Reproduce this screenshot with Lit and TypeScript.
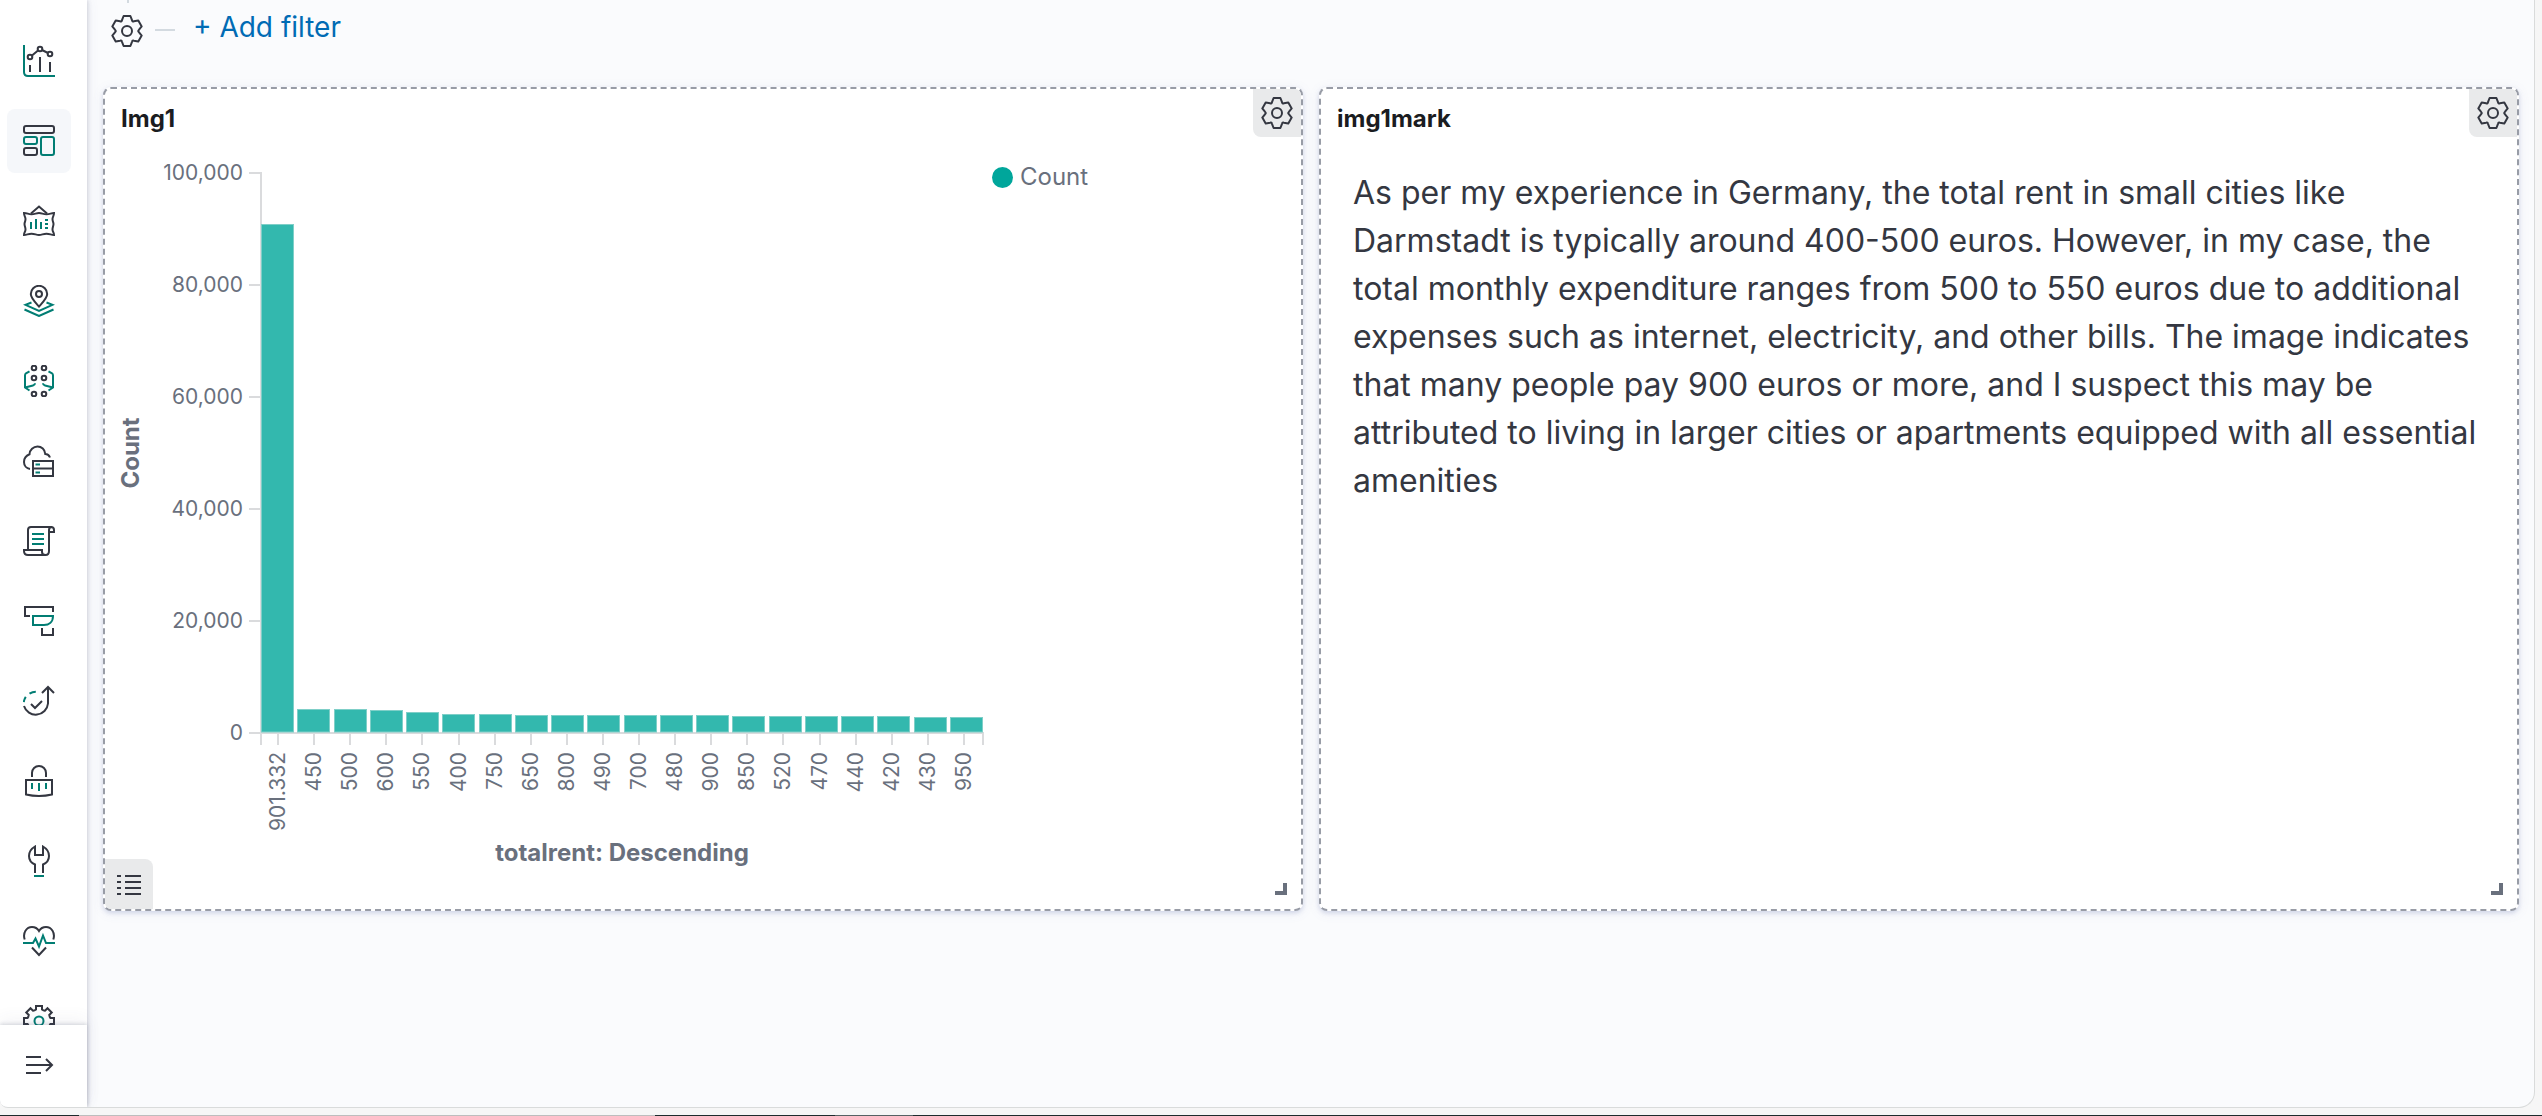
import { LitElement, html, svg, css } from "lit";
import { customElement } from "lit/decorators.js";

type Point = [number, number];

/* Outline of a cog: each tooth is given in local coordinates (tip and base half widths). */
function cog(teeth: number, tip: number, outer: number, base: number, inner: number): string {
  const at = (k: number, x: number, y: number): Point => {
    const a = (k * 2 * Math.PI) / teeth;
    return [16 + x * Math.cos(a) + y * Math.sin(a), 16 + x * Math.sin(a) - y * Math.cos(a)];
  };
  const f = (p: Point) => `${p[0].toFixed(2)} ${p[1].toFixed(2)}`;
  let d = "";
  for (let k = 0; k < teeth; k++) {
    d += `${k ? "L" : "M"}${f(at(k, -base, inner))}L${f(at(k, -tip, outer))}L${f(at(k, tip, outer))}L${f(at(k, base, inner))}`;
    d += `Q${f(at(k + 0.5, 0, inner - 0.2))} ${f(at(k + 1, -base, inner))}`;
  }
  return d + "Z";
}

const icon = (body: unknown) => html`<svg class="icon" viewBox="0 0 32 32" aria-hidden="true">${body}</svg>`;

const settingsIcon = icon(svg`
  <path class="d" stroke-linejoin="round" d=${cog(6, 3.4, 15, 5, 10.8)}></path>
  <circle class="d" cx="16" cy="16" r="5"></circle>`);

const listIcon = icon(svg`<path class="d" d="M4 8h4M12 8h16M4 14h4M12 14h16M4 20h4M12 20h16M4 26h4M12 26h16"></path>`);

const expandIcon = icon(svg`<path class="d" d="M3 8h15M3 16h26M3 24h15M23 10l6 6-6 6"></path>`);

const navItems = [
  {
    label: "Visualize",
    body: svg`
      <path class="t" d="M1 0v27q0 4 4 4h27"></path>
      <circle class="d" cx="7" cy="12" r="2.3"></circle>
      <circle class="d" cx="17" cy="4" r="2.3"></circle>
      <circle class="d" cx="27" cy="9" r="2.3"></circle>
      <path class="d" d="M9 10.5l6-5M19 5l6 3M7 20v7M17 12v15M27 17v10"></path>`,
  },
  {
    label: "Dashboard",
    active: true,
    body: svg`
      <rect class="d" x="1" y="1" width="30" height="7" rx="2"></rect>
      <rect class="t" x="1" y="12" width="13" height="7" rx="2"></rect>
      <rect class="d" x="1" y="23" width="13" height="7" rx="2"></rect>
      <rect class="t" x="18" y="12" width="13" height="18" rx="2"></rect>`,
  },
  {
    label: "Canvas",
    body: svg`
      <path class="d" d="M8 8.5l8-7 8 7"></path>
      <path class="d" d="M1 8c3.5 0 4 1.300 7.500 1.300S13 8 16 8s4 1.300 7.500 1.300S28 8 31 8c0 3-1.500 3.500-1.500 6s1 3 1 5-1 3-1 5.500S31 27 31 30c-3 0-4-1.300-7.500-1.300S19 30 16 30s-4-1.300-7.500-1.300S4 30 1 30c0-3 1.500-3 1.500-5.500s-1-3.500-1-5.500 1-2.500 1-5S1 11 1 8z"></path>
      <path class="t" d="M8 17v7M13 14v10M18 17v7M22 15h3M22 19h3M22 23h3"></path>`,
  },
  {
    label: "Maps",
    body: svg`
      <path class="d" d="M16 21.500C11 16 7.800 13 7.800 9a8.200 8.200 0 0 1 16.400 0c0 4-3.200 7-8.200 12.500z"></path>
      <circle class="d" cx="16" cy="9" r="3"></circle>
      <path class="t" d="M8.500 17.500l-6 2.300L16 26l13.500-6.200-6-2.300M1.500 24.500L16 31l14.500-6.500"></path>`,
  },
  {
    label: "Machine Learning",
    body: svg`
      ${[3, 13, 29].map((y) => [11, 21].map((x) => svg`<circle class="d" cx=${x} cy=${y} r="2.3"></circle>`))}
      <path class="t" d="M6.500 6.300L3 8.300Q2 9 2 10.500V22.500L6.500 25.500M12 18.300Q12 20 10 20.500L2 22.500M25.500 6.300L29 8.300Q30 9 30 10.500V22.500L25.500 25.500M20 18.300Q20 20 22 20.500L30 22.500"></path>`,
  },
  {
    label: "Metrics",
    body: svg`
      <path class="d" d="M27 12.500C26 10 24 9 22.300 9 22 4.500 18.500 1.500 14.500 1.500S6.500 5 6.500 9.300C3.500 10.500 1 13.500 1 17c0 3.500 2.500 6.500 6 7"></path>
      <rect class="d" x="10" y="16" width="20" height="15"></rect>
      <path class="d" d="M10 23.500h20"></path>
      <path class="t" d="M12.500 19.500h4.500M12.500 27.500h4.500"></path>`,
  },
  {
    label: "Logs",
    body: svg`
      <path class="d" d="M5 25V5q0-3 3-3h20q3 0 3 3v2h-5V5q0-3 3-3M26 7v19q0 4-3.500 4H5q-4 0-4-4v-1h18v2q0 3 3.500 3"></path>
      <path class="t" d="M9 9h12M9 14h12M9 19h12"></path>`,
  },
  {
    label: "APM",
    body: svg`
      <path class="d" d="M7 11H2V2h28v5M19 23v7h11v-7"></path>
      <path class="t" d="M10 11h20c0 6-4 9-9 9H10z"></path>`,
  },
  {
    label: "Uptime",
    body: svg`
      <path class="d" d="M19 8l6-6 6 6M25 2v16.500A12.300 12.300 0 0 1 1 21M8 19l4 4 7-7"></path>
      <path class="t" d="M.8 17q.4-3 2-5.200M6.500 8.700q3-2 6.300-2"></path>`,
  },
  {
    label: "Security",
    body: svg`
      <path class="d" d="M9 12V8a7 7 0 0 1 14 0v4M3 15h26v14.500q-13 3-26 0z"></path>
      <path class="t" d="M9 18v6M16 18v8M23 18v6"></path>`,
  },
  {
    label: "Dev Tools",
    body: svg`
      <path class="d" d="M12 28v-8.500C8.500 18 6 15 6 11c0-4 2.500-7.500 6-9.500V10h8V1.500c3.500 2 6 5.500 6 9.500 0 4-2.500 7-6 8.500V28"></path>
      <path class="t" d="M11 31h10"></path>`,
  },
  {
    label: "Stack Monitoring",
    body: svg`
      <path class="d" d="M1.700 14.500C-.5 8 3.500 2 9 2c3 0 5.500 1.500 7 4 1.500-2.500 4-4 7-4 5.500 0 9.500 6 7.300 12.500M9 22.500l7 7.500 7-7.500"></path>
      <path class="t" d="M0 18h10l2.500-4.500L16 21.500l4-11 3 7.500h9"></path>`,
  },
  {
    label: "Management",
    body: svg`
      <path class="d" d=${cog(8, 3, 15, 3, 11.5)}></path>
      <circle class="t" cx="16" cy="16" r="4.500"></circle>`,
  },
];

const rents: [string, number][] = [
  ["901.332", 90900], ["450", 4290], ["500", 4250], ["600", 4110], ["550", 3750],
  ["400", 3390], ["750", 3390], ["650", 3300], ["800", 3210], ["490", 3210],
  ["700", 3210], ["480", 3180], ["900", 3160], ["850", 3120], ["520", 3040],
  ["470", 3040], ["440", 3040], ["420", 3040], ["430", 2860], ["950", 2860],
];

const iconStyles = css`
  .icon { display: block; width: 32px; height: 32px; fill: none; }
  .d { stroke: #343741; stroke-width: 2; fill: none; }
  .t { stroke: #017d73; stroke-width: 2; fill: none; }
  button { display: flex; align-items: center; justify-content: center; padding: 0; border: 0; background: none; cursor: pointer; font: inherit; }
`;

@customElement("side-nav")
export class SideNav extends LitElement {
  static styles = [
    iconStyles,
    css`
      :host { display: flex; flex-direction: column; width: 87px; min-height: 0; background: #fff; box-shadow: 1px 0 4px rgba(70, 76, 100, 0.2), 0 0 12px rgba(90, 100, 160, 0.1); }
      ul { flex: 1; min-height: 0; overflow: hidden; margin: 0; padding: 29px 0 0 7px; box-sizing: border-box; list-style: none; display: flex; flex-direction: column; gap: 16px; }
      li { flex: none; }
      .item { width: 64px; height: 64px; border-radius: 8px; }
      .active { background: #f5f7fa; }
      .foot { padding: 8px 0 10px 7px; box-shadow: 0 -1px 4px rgba(70, 76, 100, 0.22), 0 -6px 16px rgba(70, 76, 100, 0.06); }
    `,
  ];
  render() {
    return html`
      <ul>
        ${navItems.map((n) => html`<li><button class="item ${n.active ? "active" : ""}" aria-label=${n.label}>${icon(n.body)}</button></li>`)}
      </ul>
      <div class="foot"><button class="item" aria-label="Expand">${expandIcon}</button></div>
    `;
  }
}

@customElement("dash-panel")
export class DashPanel extends LitElement {
  static properties = { heading: {}, inspect: { type: Boolean } };
  declare heading: string;
  declare inspect: boolean;
  static styles = [
    iconStyles,
    css`
      :host { position: relative; display: flex; flex-direction: column; min-width: 0; height: 824px; box-sizing: border-box; border: 2px dashed #989ca6; border-radius: 8px; background: #fff; box-shadow: 0 2px 4px rgba(110, 120, 180, 0.24), 0 2px 12px rgba(110, 120, 180, 0.1); }
      h2 { margin: 0; padding: 12px 16px; font-size: 24px; line-height: 36px; font-weight: 700; color: #1a1c21; }
      .body { flex: 1; min-height: 0; }
      .options { position: absolute; top: 0; right: 0; width: 48px; height: 48px; background: #e9eaeb; border-radius: 0 6px 0 8px; }
      .legend { position: absolute; bottom: 0; left: 0; width: 48px; height: 50px; background: #e9eaeb; border-radius: 0 8px 0 6px; }
      .grip { position: absolute; right: 14px; bottom: 14px; width: 8px; height: 8px; border: solid #69707d; border-width: 0 4px 4px 0; }
    `,
  ];
  render() {
    return html`
      <h2>${this.heading}</h2>
      <div class="body"><slot></slot></div>
      <button class="options" aria-label="Panel options">${settingsIcon}</button>
      ${this.inspect ? html`<button class="legend" aria-label="Toggle legend">${listIcon}</button>` : ""}
      <span class="grip"></span>
    `;
  }
}

@customElement("rent-chart")
export class RentChart extends LitElement {
  static styles = css`
    :host { display: flex; }
    .plot { flex: 1; min-width: 0; display: block; }
    .axis { stroke: #dadbdd; stroke-width: 2; fill: none; }
    .bar { fill: #33b8ae; stroke: #7fcfc8; stroke-width: 1; }
    .tick { font-size: 21px; fill: #69707d; }
    .title { font-size: 24px; font-weight: 700; fill: #69707d; text-anchor: middle; }
    .key { flex: 0 0 309px; display: flex; align-items: center; gap: 7px; height: 36px; padding-top: 10px; font-size: 24px; line-height: 36px; color: #69707d; }
    .dot { width: 21px; height: 21px; border-radius: 50%; background: #00a69b; }
    .end { text-anchor: end; }
  `;
  render() {
    const left = 156, top = 24, bottom = 584, width = 722;
    const band = width / rents.length;
    const y = (v: number) => bottom - (v / 100000) * (bottom - top);
    return html`
      <svg class="plot" viewBox="0 0 887 760" role="img" aria-label="Count by totalrent">
        ${[0, 20000, 40000, 60000, 80000, 100000].map((v) => svg`
          <path class="axis" d="M${left - 12} ${y(v)}h12"></path>
          <text class="tick end" x=${left - 18} y=${y(v) + 7}>${v.toLocaleString("en-US")}</text>`)}
        <path class="axis" d="M${left} ${top - 1}V${bottom + 12}M${left} ${bottom}H${left + width}v12"></path>
        ${rents.map(([name, v], i) => {
          const x = left + i * ((width - 33) / (rents.length - 1));
          const mid = left + band * (i + 0.5);
          return svg`
            <rect class="bar" x=${Math.round(x) + 0.5} y=${Math.round(y(v)) + 0.5} width="32" height=${bottom - 1.5 - Math.round(y(v))}></rect>
            <path class="axis" d="M${Math.round(mid - 1)} ${bottom}v12"></path>
            <text class="tick end" transform="translate(${Math.round(mid) + 6} 603) rotate(-90)">${name}</text>`;
        })}
        <text class="title" transform="translate(34 304) rotate(-90)">Count</text>
        <text class="title" x="517" y="712">totalrent: Descending</text>
      </svg>
      <div class="key"><span class="dot"></span><span>Count</span></div>
    `;
  }
}

@customElement("app-root")
export class AppRoot extends LitElement {
  static styles = [
    iconStyles,
    css`
      :host { display: block; font-family: Inter, "Liberation Sans", sans-serif; }
      .screen { display: grid; grid-template-rows: minmax(0, 1fr) 1px; height: 100vh; background: #f6f6f6; }
      .window { display: flex; margin: 0 7px 7px 0; border: solid #d9dbdb; border-width: 0 1px 1px 0; border-radius: 0 0 16px 8px; overflow: hidden; background: #fafbfd; min-height: 0; }
      side-nav { flex: none; z-index: 1; }
      main { flex: 1; min-width: 0; padding: 0 15px 0 16px; }
      .filters { position: relative; display: flex; align-items: flex-start; gap: 12px; height: 87px; padding: 15px 8px 0; box-sizing: border-box; }
      .filters::before { content: ""; position: absolute; top: 0; left: 24px; width: 2px; height: 3px; background: #d3dae0; }
      .dash { width: 20px; height: 14px; border-bottom: 2px solid #d3dae0; }
      .add { margin-left: 6px; font-size: 28px; line-height: 24px; color: #006bb4; text-decoration: none; }
      .grid { display: grid; grid-template-columns: 1fr 1fr; gap: 16px; }
      .note { margin: 0; padding: 20px 32px; font-size: 32px; line-height: 48px; color: #343741; }
      .edge { background: linear-gradient(90deg, #1e2b2d 79px, #bdbdbd 79px 655px, #1e2b2d 655px 835px, #566163 835px 913px, #1e2b2d 913px); }
    `,
  ];
  render() {
    return html`
      <div class="screen">
        <div class="window">
          <side-nav></side-nav>
          <main>
            <div class="filters">
              <button aria-label="Filter options">${settingsIcon}</button>
              <span class="dash"></span>
              <a class="add" href="#">+ Add filter</a>
            </div>
            <div class="grid">
              <dash-panel heading="Img1" inspect><rent-chart></rent-chart></dash-panel>
              <dash-panel heading="img1mark">
                <p class="note">As per my experience in Germany, the total rent in small cities like Darmstadt is typically around 400-500 euros. However, in my case, the total monthly expenditure ranges from 500 to 550 euros due to additional expenses such as internet, electricity, and other bills. The image indicates that many people pay 900 euros or more, and I suspect this may be attributed to living in larger cities or apartments equipped with all essential amenities</p>
              </dash-panel>
            </div>
          </main>
        </div>
        <div class="edge"></div>
      </div>
    `;
  }
}
